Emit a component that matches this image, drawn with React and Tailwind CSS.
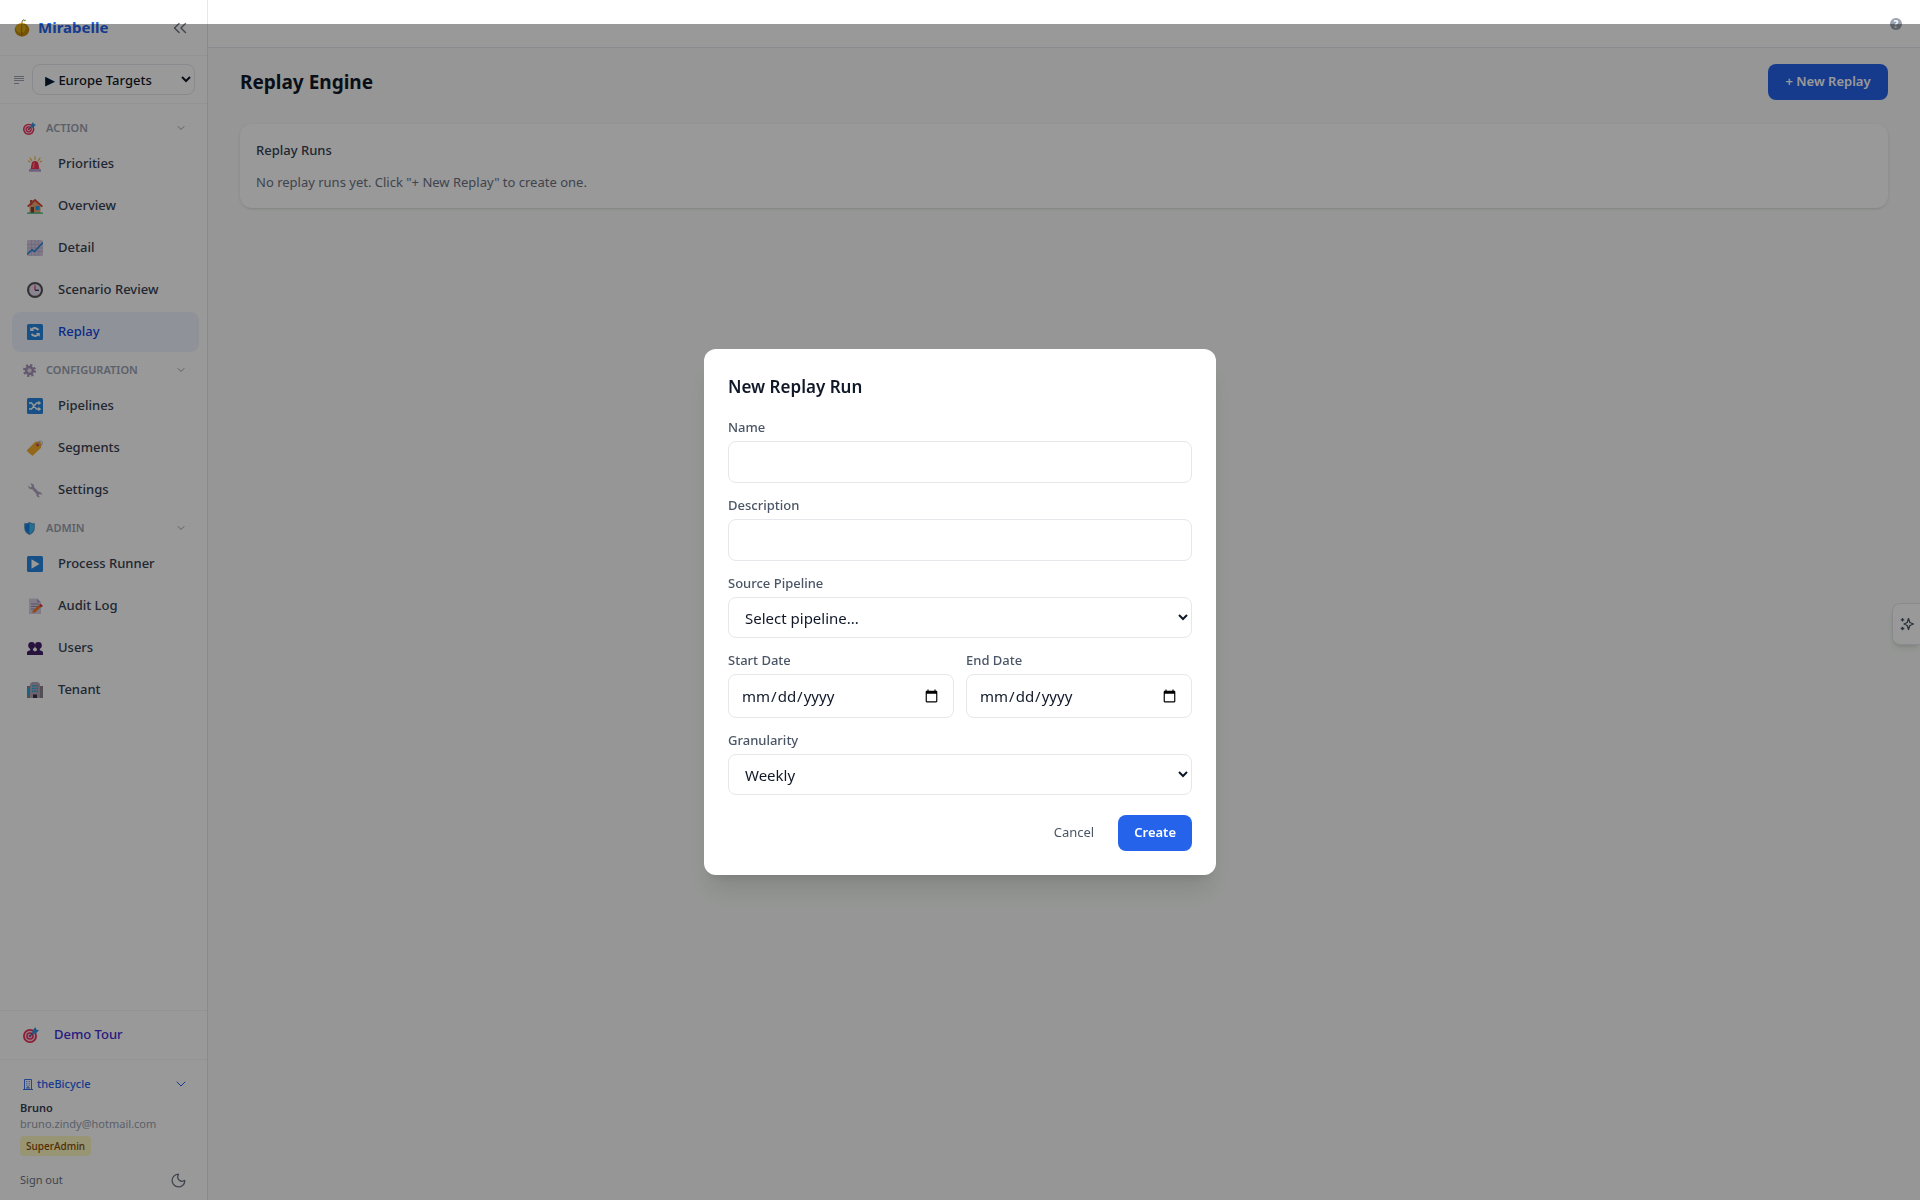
import { useState } from 'react';
import { ChevronDown, ChevronsLeft, Moon } from 'lucide-react';

// emoji style icons, all on a 16 x 16 grid
const icons = {
    target: <>
        <circle cx="7" cy="9" r="7" fill="#e8315b" />
        <circle cx="7" cy="9" r="5.2" fill="#f6d5e2" />
        <circle cx="7" cy="9" r="3.8" fill="#e8315b" />
        <circle cx="7" cy="9" r="2.3" fill="#f6d5e2" />
        <circle cx="7" cy="9" r="1.3" fill="#e8315b" />
        <path d="M7 9l4-4" stroke="#2a6fb0" strokeWidth="1.2" />
        <path d="M9.500 3.800L12.300 0l1 2.500 2.700.8-3.300 3.200-3 .2z" fill="#2f95e0" />
    </>,
    siren: <>
        <path d="M8 .5v3M3 2l1.8 2.6M13 2l-1.800 2.600M1.500 5l1.500 1M14.500 5L13 6" stroke="#f0b23a" strokeWidth="1.100" strokeLinecap="round" />
        <path d="M4.500 8.200C4.700 6 6 5 8 5s3.300 1 3.500 3.200l1 5.300h-9z" fill="#ef3350" />
        <path d="M6 8.500c.1-1.500.8-2.200 1.800-2.300L7 12H5.500z" fill="#ff7d88" />
        <rect x="2" y="13" width="12" height="2.800" rx=".6" fill="#b8a5d0" />
    </>,
    house: <>
        <path d="M2.500 7.500L8 2.500l5.500 5V15h-11z" fill="#e8a573" />
        <path d="M3 2h2.500v4L3 8z" fill="#a85a40" />
        <path d="M8 .8L0 8l1.300 1.200L8 3.300l6.700 5.900L16 8z" fill="#dd4338" />
        <rect x="3.800" y="9" width="3.200" height="6" fill="#7d4533" />
        <rect x="8.500" y="8" width="4" height="4" fill="#25a2e8" />
        <rect x="0" y="14.500" width="16" height="1.300" rx=".6" fill="#32b67a" />
    </>,
    chart: <>
        <rect width="16" height="16" rx="1.500" fill="#d3c8e2" />
        <path d="M0 4.500h16M0 8h16M0 11.500h16M4.500 0v16M8 0v16M11.500 0v16" stroke="#b6a8cb" strokeWidth=".6" />
        <path d="M0 14.500L5 9.800l2.500 1.700L16 2.500" stroke="#2489dc" strokeWidth="1.500" fill="none" />
    </>,
    clock: <>
        <circle cx="8" cy="8" r="7" fill="#e5dcee" stroke="#565158" strokeWidth="2" />
        <path d="M8 3.500V8" stroke="#e23c6c" strokeWidth="1.300" />
        <path d="M8 8.300h4" stroke="#2d3555" strokeWidth="1.300" />
        <path d="M8 2.200v.8M8 13v.8M2.200 8H3" stroke="#777" strokeWidth=".8" />
    </>,
    replay: <>
        <rect width="16" height="16" rx="1.500" fill="#2586df" />
        <path d="M3.200 7V3.200l1.300 1.200a5 5 0 017.800 1.400l-1.900.8a3 3 0 00-4.500-.8L7.200 7zM12.800 9v3.800l-1.300-1.200a5 5 0 01-7.800-1.400l1.900-.8a3 3 0 004.500.8L8.800 9z" fill="#fff" />
    </>,
    gear: <>
        <circle cx="8" cy="8" r="6.500" stroke="#a593b8" strokeWidth="3" strokeDasharray="2.600 2.505" fill="none" />
        <circle cx="8" cy="8" r="4.300" stroke="#a593b8" strokeWidth="3" fill="#dcd3e4" />
        <circle cx="8" cy="8" r="2.200" fill="#e8e2ee" />
    </>,
    shuffle: <>
        <rect width="16" height="16" rx="1.500" fill="#2586df" />
        <path d="M2 5h2.500l5 6H12M2 11h2.500l5-6H12" stroke="#fff" strokeWidth="1.400" fill="none" />
        <path d="M11.300 2.800L14.200 5l-2.900 2.200zM11.300 8.800l2.900 2.200-2.900 2.200z" fill="#fff" />
    </>,
    tag: <>
        <path d="M.4 9.800L8.400 1.800l4.300-.3 1.700 1.700-.3 4.500-7.800 7.600a1.200 1.200 0 01-1.700 0L.4 11.500a1.200 1.200 0 010-1.700z" fill="#f5ae2c" />
        <circle cx="10.800" cy="4.800" r="1.600" fill="#c8402f" />
        <circle cx="13.200" cy="3.300" r="2.300" stroke="#b9abc9" strokeWidth=".8" fill="none" />
    </>,
    wrench: <path d="M1.200 3.500L3.500 5.500 5 4.200 3.300 1.500C5.500 1 7.500 2.800 7.200 5.300l4.300 4.400c2-.3 3.800 1.500 3.300 3.600l-1.700-1.500-1.700 1.400 1.600 2.100c-2.300.4-3.900-1.400-3.600-3.400L5.200 7.200C2.800 7.500.9 5.800 1.200 3.500z" fill="#b3a5c3" />,
    shield: <>
        <path d="M8 0c2 1.500 4.300 1.800 6.500 1.500V7c0 4.500-2.500 7.300-6.500 9-4-1.700-6.500-4.500-6.500-9V1.500C3.700 1.800 6 1.500 8 0z" fill="#5a8dc4" />
        <path d="M8 1.500V14.500C4.700 13 2.800 10.500 2.800 7V2.800C4.700 2.900 6.500 2.500 8 1.500z" fill="#177fdf" />
        <path d="M8 1.500V14.500c3.300-1.500 5.200-4 5.200-7.500V2.800c-1.900.1-3.700-.3-5.200-1.300z" fill="#3cbcf3" />
    </>,
    play: <>
        <rect width="16" height="16" rx="1.500" fill="#2586df" />
        <path d="M4.500 3.200l8 4.800-8 4.800z" fill="#fff" />
    </>,
    memo: <>
        <path d="M2 .5h8L14 4.500V16H2z" fill="#d9cfe3" />
        <path d="M10 .5V4.500h4z" fill="#af9fc2" />
        <path d="M4 6h8M4 8.500h7M4 11h4" stroke="#9483aa" strokeWidth=".9" />
        <path d="M6 12.500l6-5.500 2 2-6 5.500L5.300 15z" fill="#f47a2b" />
        <path d="M12 7l1.700-1.300L16 8l-2 1.400z" fill="#e5353f" />
    </>,
    users: <>
        <circle cx="4.600" cy="5.500" r="3.400" fill="#432168" />
        <circle cx="11.400" cy="5.500" r="3.400" fill="#432168" />
        <path d="M3.200 8h2.800v2.200l2 1.300 2-1.300V8h2.800v2.200L15 11c.8.500 1 1 1 2v2H0v-2c0-1 .2-1.500 1-2l2.200-.8z" fill="#432168" />
    </>,
    building: <>
        <path d="M0 4h3v12H0zM13 4h3v12h-3z" fill="#8a8090" />
        <path d="M3 2l2-2h6l2 2v14H3z" fill="#b5a9bb" />
        <path d="M5 3h1.500v1.500H5zM7.300 3h1.500v1.500H7.300zM9.600 3h1.500v1.500H9.600zM5 5.700h1.500v1.500H5zM7.300 5.700h1.500v1.500H7.300zM9.600 5.700h1.500v1.500H9.600zM5 8.400h1.500v1.500H5zM7.300 8.400h1.500v1.500H7.300zM9.600 8.400h1.500v1.500H9.600zM1 6h1v7H1zM14 6h1v7h-1z" fill="#25a9dd" />
        <rect x="6" y="12.500" width="4" height="3.500" fill="#3a2f45" />
    </>,
}

const Emoji = ({ name, className = "size-4" }) => (
    <svg viewBox="0 0 16 16" fill="none" aria-hidden="true" className={`shrink-0 ${className}`}>{icons[name]}</svg>
)

const Logo = () => (
    <svg viewBox="0 0 16 18" fill="none" aria-hidden="true" className="h-[18px] w-4 shrink-0">
        <path d="M8 5C7.800 3 8.300 1.500 9.500.5" stroke="#6b4a1d" strokeWidth="1" />
        <path d="M9 1.800C10 .6 11.500.6 12 1.200 11.300 2.300 10 2.500 9 1.800z" fill="#5c9a3a" />
        <ellipse cx="8" cy="10.800" rx="7.300" ry="6.800" fill="#c58c0a" />
        <ellipse cx="6.800" cy="9.300" rx="5" ry="4.500" fill="#dfaa17" />
        <path d="M8 4.500c-.6 4-.6 9 0 13" stroke="#8f6106" strokeWidth=".7" />
    </svg>
)

const groups = [
    { label: "ACTION", icon: "target", items: [
        { label: "Priorities", icon: "siren" },
        { label: "Overview", icon: "house" },
        { label: "Detail", icon: "chart" },
        { label: "Scenario Review", icon: "clock" },
        { label: "Replay", icon: "replay", active: true },
    ]},
    { label: "CONFIGURATION", icon: "gear", items: [
        { label: "Pipelines", icon: "shuffle" },
        { label: "Segments", icon: "tag" },
        { label: "Settings", icon: "wrench" },
    ]},
    { label: "ADMIN", icon: "shield", items: [
        { label: "Process Runner", icon: "play" },
        { label: "Audit Log", icon: "memo" },
        { label: "Users", icon: "users" },
        { label: "Tenant", icon: "building" },
    ]},
]

const Sidebar = () => (
    <aside className="flex w-52 shrink-0 flex-col border-r border-gray-200 bg-white">
        <div className="flex h-14 items-center gap-2 border-b border-gray-100 pl-3.5 pr-4">
            <Logo />
            <span className="flex-1 text-[15px] font-bold text-[#2563eb]">Mirabelle</span>
            <button type="button" aria-label="Collapse sidebar" className="text-gray-500"><ChevronsLeft className="size-[22px]" strokeWidth={1.5} /></button>
        </div>
        <div className="flex h-12 items-center gap-2 border-b border-gray-100 pl-3.5 pr-3">
            <svg viewBox="0 0 10 8" aria-hidden="true" className="h-2 w-2.5 shrink-0"><path d="M0 .5h10M0 2.500h10M0 4.500h10M0 7.500h5" stroke="#9ca3af" strokeWidth="1" /></svg>
            <select aria-label="Pipeline" className="h-[31px] min-w-0 flex-1 rounded-lg border border-gray-200 bg-white px-2 text-[13px] font-medium text-gray-900">
                <option>▶ Europe Targets</option>
            </select>
        </div>
        <nav className="flex flex-1 flex-col gap-0.5 overflow-hidden py-2 pl-3 pr-2">
            {groups.map((group) => (
                <div key={group.label}>
                    <button type="button" className="flex h-8 w-full items-center gap-2.5 pl-[11px] pr-3 text-gray-400">
                        <Emoji name={group.icon} className="size-[13px]" />
                        <span className="flex-1 text-left text-[11px] font-semibold">{group.label}</span>
                        <ChevronDown className="size-3" strokeWidth={2} />
                    </button>
                    <div className="flex flex-col gap-0.5">
                        {group.items.map((item) => (
                            <a key={item.label} href="#" className={`flex h-10 items-center gap-[15px] rounded-lg px-[15px] text-[13px] font-medium ${item.active ? "bg-blue-50 text-blue-700" : "text-gray-700"}`}>
                                <Emoji name={item.icon} />
                                {item.label}
                            </a>
                        ))}
                    </div>
                </div>
            ))}
        </nav>
        <div className="border-t border-gray-100">
            <button type="button" className="flex h-12 w-full items-center gap-[15px] px-[23px] text-[13px] font-medium text-indigo-700">
                <Emoji name="target" />
                Demo Tour
            </button>
        </div>
        <div className="flex flex-col border-t border-gray-100 px-5 pb-2 pt-4">
            <button type="button" className="-mr-0.5 flex h-4 items-center gap-1 pl-[3px] text-[11px] font-medium text-[#2563eb]">
                <svg viewBox="0 0 10 11" fill="none" stroke="currentColor" strokeWidth=".9" aria-hidden="true" className="h-[11px] w-2.5">
                    <path d="M0 10.500h10M1.500 10.500V.5h7v10M4 10.500V8h2v2.500M3.300 2.500h1M5.700 2.500h1M3.300 4.300h1M5.700 4.300h1M3.300 6.200h1M5.700 6.200h1" />
                </svg>
                <span className="flex-1 text-left">theBicycle</span>
                <ChevronDown className="size-4" strokeWidth={1.5} />
            </button>
            <div className="mt-2 text-[11px] leading-4 font-semibold text-gray-700">Bruno</div>
            <div className="text-[11px] leading-4 text-gray-400">bruno.zindy@hotmail.com</div>
            <div className="mt-1 flex"><span className="rounded bg-yellow-100 px-1.5 text-[10px] leading-5 font-medium text-yellow-800">SuperAdmin</span></div>
            <div className="mt-3 flex h-6 items-center justify-between">
                <button type="button" className="text-[11px] text-gray-500">Sign out</button>
                <button type="button" aria-label="Dark mode" className="text-gray-500"><Moon className="size-[17px]" strokeWidth={1.8} /></button>
            </div>
        </div>
    </aside>
)

const fieldClass = "w-full rounded-lg border border-gray-200 bg-white px-3 text-[15px] text-gray-900"

const Field = ({ id, label, children }) => (
    <div className="flex flex-1 flex-col gap-1">
        <label htmlFor={id} className="text-[13px] leading-5 font-medium text-gray-600">{label}</label>
        {children}
    </div>
)

const NewReplayModal = ({ onClose }) => {
    const [form, setForm] = useState({ name: "", description: "", pipeline: "", start: "", end: "", granularity: "weekly" })
    const update = (key) => (e) => setForm(prev => ({ ...prev, [key]: e.target.value }))

    return (
        <div className="fixed inset-0 z-50 mt-6 flex items-center justify-center bg-black/40">
            <form role="dialog" aria-labelledby="modal-title" onSubmit={(e) => e.preventDefault()} className="w-full max-w-lg rounded-xl bg-white p-6 shadow-xl">
                <h2 id="modal-title" className="mb-4 text-[17px] leading-7 font-semibold text-gray-900">New Replay Run</h2>
                <div className="flex flex-col gap-3">
                    <Field id="name" label="Name">
                        <input id="name" type="text" value={form.name} onChange={update("name")} className={`h-[42px] ${fieldClass}`} />
                    </Field>
                    <Field id="description" label="Description">
                        <input id="description" type="text" value={form.description} onChange={update("description")} className={`h-[42px] ${fieldClass}`} />
                    </Field>
                    <Field id="pipeline" label="Source Pipeline">
                        <select id="pipeline" value={form.pipeline} onChange={update("pipeline")} className={`h-[41px] ${fieldClass}`}>
                            <option value="">Select pipeline...</option>
                        </select>
                    </Field>
                    <div className="flex gap-3">
                        <Field id="start" label="Start Date">
                            <input id="start" type="date" value={form.start} onChange={update("start")} className={`h-11 ${fieldClass}`} />
                        </Field>
                        <Field id="end" label="End Date">
                            <input id="end" type="date" value={form.end} onChange={update("end")} className={`h-11 ${fieldClass}`} />
                        </Field>
                    </div>
                    <Field id="granularity" label="Granularity">
                        <select id="granularity" value={form.granularity} onChange={update("granularity")} className={`h-[41px] ${fieldClass}`}>
                            <option value="weekly">Weekly</option>
                        </select>
                    </Field>
                </div>
                <div className="mt-5 flex justify-end gap-2">
                    <button type="button" onClick={onClose} className="h-9 px-4 text-[13px] text-gray-600">Cancel</button>
                    <button type="submit" className="h-9 rounded-lg bg-[#2563eb] px-4 text-[13px] font-semibold text-white">Create</button>
                </div>
            </form>
        </div>
    )
}

const App = () => {
    const [open, setOpen] = useState(true)

    return (
        <div className="flex h-screen bg-[#f8fbf8] font-['Noto_Sans','Open_Sans',sans-serif]">
            <Sidebar />
            <div className="flex min-w-0 flex-1 flex-col">
                <header className="flex h-12 items-center justify-end border-b border-gray-200 bg-white px-[18px]">
                    <button type="button" aria-label="Help" className="flex size-3 items-center justify-center rounded-full bg-gray-400 text-[10px] leading-3 font-bold text-white">?</button>
                </header>
                <main className="flex flex-1 flex-col gap-6 px-8 py-4">
                    <div className="flex items-center justify-between">
                        <h1 className="text-[19px] font-bold text-gray-900">Replay Engine</h1>
                        <button type="button" onClick={() => setOpen(true)} className="h-9 w-30 rounded-lg bg-[#2563eb] text-[13px] font-semibold text-white">+ New Replay</button>
                    </div>
                    <section className="rounded-xl bg-white p-4 shadow-sm">
                        <h2 className="mb-3 text-[13px] leading-5 font-medium text-gray-700">Replay Runs</h2>
                        <p className="text-[13px] leading-5 text-gray-500">No replay runs yet. Click "+ New Replay" to create one.</p>
                    </section>
                </main>
            </div>
            {/* assistant tab, pinned to the right edge */}
            <button type="button" aria-label="Open assistant" className="fixed right-0 top-[603px] flex h-[42px] w-7 items-center justify-center rounded-l-lg border border-r-0 border-gray-200 bg-white text-gray-600 shadow-md">
                <svg viewBox="0 0 14 14" fill="none" stroke="currentColor" aria-hidden="true" className="size-3.5">
                    <path d="M8.500 1.500l1.300 4 3.700 1.500-3.700 1.500-1.300 4-1.300-4L4 7l3.200-1.500z" strokeWidth="1.300" strokeLinejoin="round" />
                    <path d="M2.500 1v3.600M.7 2.800h3.600M2.500 9.700v3.600M.7 11.500h3.600" strokeWidth="1.300" />
                </svg>
            </button>
            {open && <NewReplayModal onClose={() => setOpen(false)} />}
        </div>
    )
}

export default App
